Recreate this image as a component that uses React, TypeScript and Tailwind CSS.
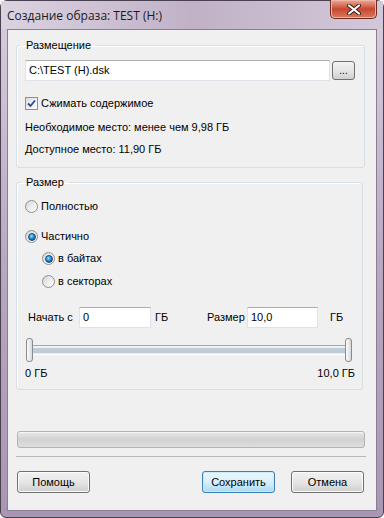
import React from 'react'

function Radio({ checked }: { checked?: boolean }) {
    return (
        <span className="flex items-center justify-center w-[13px] h-[13px] rounded-full border border-[#8e8f8f] bg-gradient-to-br from-[#d2d2d2] via-[#eeeeee] to-[#ffffff] shrink-0">
            {checked && (
                <span className="w-[8px] h-[8px] rounded-full border border-[#174a78] bg-[radial-gradient(circle_at_40%_35%,#a6dcfa_0%,#1f86cc_50%,#0b3f78_100%)]" />
            )}
        </span>
    )
}

function Checkbox() {
    return (
        <span className="flex items-center justify-center w-[13px] h-[13px] border border-[#8f8f8f] bg-gradient-to-br from-[#dedede] to-[#ffffff] shrink-0">
            <svg width="9" height="9" viewBox="0 0 9 9">
                <path d="M1 4.5 L3.5 7 L8 1.5" fill="none" stroke="#2a4e8c" strokeWidth="1.8" />
            </svg>
        </span>
    )
}

function TextBox({ value, w }: { value: string; w: string }) {
    return (
        <div className={`${w} h-[21px] flex items-center px-[3px] bg-white border border-[#dfe2e8] border-t-[#abadb3] border-l-[#e2e3ea]`}>
            {value}
        </div>
    )
}

function Button({ label, def }: { label: string; def?: boolean }) {
    return (
        <div
            className={
                def
                    ? 'w-[73px] h-[22px] flex items-center justify-center rounded-[3px] border border-[#3c7fb1] bg-gradient-to-b from-[#eaf6fd] via-[#d9f0fc] to-[#a7d9f5] shadow-[inset_0_0_0_1px_#c6ebfc]'
                    : 'w-[73px] h-[22px] flex items-center justify-center rounded-[3px] border border-[#707070] bg-gradient-to-b from-[#f2f2f2] via-[#e6e6e6] to-[#cfcfcf] shadow-[inset_0_0_0_1px_#fbfbfb]'
            }
        >
            {label}
        </div>
    )
}

function Thumb() {
    return (
        <div className="w-[7px] h-[24px] rounded-[3px] border border-[#8a8a8a] bg-gradient-to-r from-[#fdfdfd] to-[#d8d8d8] shrink-0" />
    )
}

export default function App() {
    return (
        <div className="w-[384px] h-[518px] bg-white font-['Liberation_Sans',Arial,sans-serif] text-[11px] text-black leading-[13px]">
            <div className="flex flex-col w-full h-full rounded-t-[7px] rounded-b-[6px] border border-[#4a4150] bg-gradient-to-b from-[#d8cfdf] via-[#b9a8c2] to-[#a996b3]">
                {/* title bar */}
                <div className="flex justify-between h-[28px] pl-[6px] pr-[6px] bg-gradient-to-r from-[#dcd3e1] via-[#c0b1c7] to-[#d3c8d9]">
                    <span className="mt-[8px] text-[12px] leading-[14px] text-[#1a1a1a] font-['Open_Sans',sans-serif]">
                        Создание образа: TEST (H:)
                    </span>
                    <div className="w-[47px] h-[19px] -mt-[1px] rounded-b-[5px] border border-[#6b2a22] border-t-0 bg-gradient-to-b from-[#e9a99b] via-[#c9462d] to-[#d77a60] flex items-center justify-center shadow-[inset_0_0_0_1px_#f0b7a8]">
                        <svg width="14" height="11" viewBox="0 0 14 11">
                            <path d="M2 1.5 L12 9.5 M12 1.5 L2 9.5" stroke="#3b1a16" strokeWidth="4" strokeLinecap="round" />
                            <path d="M2 1.5 L12 9.5 M12 1.5 L2 9.5" stroke="#ffffff" strokeWidth="2.2" strokeLinecap="round" />
                        </svg>
                    </div>
                </div>

                {/* client area */}
                <div className="flex flex-col flex-1 mx-[6px] mb-[6px] border border-[#8c7d95] bg-[#f0f0f0]">
                    {/* Размещение */}
                    <fieldset className="ml-[8px] mt-[9px] w-[349px] border border-[#d5dfe5] rounded-[3px] px-[8px] pt-[8px] pb-[11px] shadow-[inset_1px_1px_0_#ffffff]">
                        <legend className="-ml-[4px] px-[5px]">Размещение</legend>
                        <div className="flex items-center">
                            <TextBox value="C:\TEST (H).dsk" w="w-[305px]" />
                            <div className="ml-[2px] w-[23px] h-[19px] flex items-center justify-center rounded-[3px] border border-[#707070] bg-gradient-to-b from-[#f2f2f2] via-[#e6e6e6] to-[#cfcfcf] text-[10px]">
                                ...
                            </div>
                        </div>
                        <div className="flex items-center gap-[3px] mt-[16px]">
                            <Checkbox />
                            <span>Сжимать содержимое</span>
                        </div>
                        <p className="mt-[11px]">Необходимое место: менее чем 9,98 ГБ</p>
                        <p className="mt-[9px]">Доступное место: 11,90 ГБ</p>
                    </fieldset>

                    {/* Размер */}
                    <fieldset className="ml-[8px] mt-[8px] w-[347px] border border-[#d5dfe5] rounded-[3px] pt-[11px] pb-[9px] shadow-[inset_1px_1px_0_#ffffff]">
                        <legend className="ml-[4px] px-[5px]">Размер</legend>
                        <div className="flex items-center gap-[3px] ml-[8px]">
                            <Radio />
                            <span>Полностью</span>
                        </div>
                        <div className="flex items-center gap-[3px] ml-[8px] mt-[17px]">
                            <Radio checked />
                            <span>Частично</span>
                        </div>
                        <div className="flex items-center gap-[3px] ml-[25px] mt-[9px]">
                            <Radio checked />
                            <span>в байтах</span>
                        </div>
                        <div className="flex items-center gap-[3px] ml-[25px] mt-[10px]">
                            <Radio />
                            <span>в секторах</span>
                        </div>

                        <div className="flex items-center ml-[11px] mt-[19px]">
                            <span className="w-[51px]">Начать с</span>
                            <TextBox value="0" w="w-[72px]" />
                            <span className="w-[56px] pl-[4px]">ГБ</span>
                            <span className="w-[40px]">Размер</span>
                            <TextBox value="10,0" w="w-[71px]" />
                            <span className="ml-[12px]">ГБ</span>
                        </div>

                        <div className="flex items-center ml-[9px] mr-[10px] mt-[10px]">
                            <Thumb />
                            <div className="flex-1 flex flex-col">
                                <div className="h-[1px] bg-[#a9a9a9]" />
                                <div className="h-[2px] bg-[#eef2f5]" />
                                <div className="h-[5px] bg-[#bfcdd8]" />
                                <div className="h-[1px] bg-[#e4e9ed]" />
                                <div className="h-[1px] bg-[#ffffff]" />
                            </div>
                            <Thumb />
                        </div>

                        <div className="flex justify-between ml-[8px] mr-[7px] mt-[5px]">
                            <span>0 ГБ</span>
                            <span>10,0 ГБ</span>
                        </div>
                    </fieldset>

                    {/* progress */}
                    <div className="ml-[9px] mt-[41px] w-[348px] h-[17px] rounded-[3px] border border-[#b2b2b2] bg-gradient-to-b from-[#e8e8e8] via-[#d2d2d2] to-[#dedede] shadow-[inset_0_1px_0_#f6f6f6]" />

                    <div className="ml-[8px] mt-[8px] w-[350px] h-[1px] bg-[#b9b9b9]" />

                    <div className="flex ml-[9px] mt-[14px] w-[347px]">
                        <Button label="Помощь" />
                        <div className="flex-1" />
                        <Button label="Сохранить" def />
                        <div className="w-[16px]" />
                        <Button label="Отмена" />
                    </div>
                </div>
            </div>
        </div>
    )
}
